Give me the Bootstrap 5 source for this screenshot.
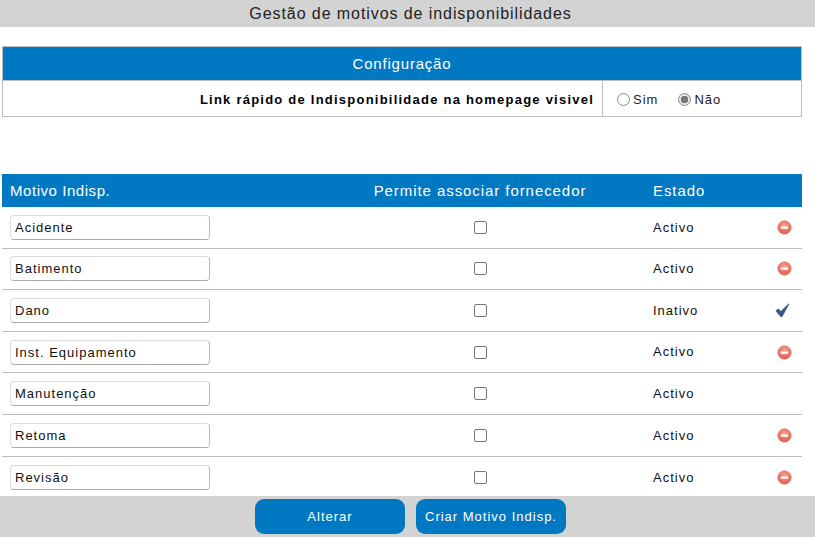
<!DOCTYPE html>
<html lang="pt">
<head>
<meta charset="utf-8">
<title>Gestão de motivos de indisponibilidades</title>
<link rel="stylesheet" href="https://cdn.jsdelivr.net/npm/bootstrap@5.3.0/dist/css/bootstrap.min.css">
<style>
html,body{height:100%;overflow:hidden}
body{font-family:"Liberation Sans",Arial,sans-serif;font-size:13px;letter-spacing:1px;color:#111;background:#fff}
.shell{height:537px}
.topbar{height:27px;background:#d3d3d3;font-size:16px;letter-spacing:.92px;line-height:28px;color:#222;padding-left:6px}
.work{padding:19px 13px 0 2px;min-height:0;overflow:hidden}
.cfg{border:1px solid #bdbdbd;height:71px;margin-bottom:57px}
.cfg-head{height:33px;background:#0079c2;color:#fff;font-size:15px;letter-spacing:.8px;line-height:34px}
.cfg-row{height:36px;border-top:1px solid #bdbdbd}
.cfg-label{width:599px;padding-right:8px;font-weight:700;letter-spacing:1.23px;padding-top:2px;color:#000}
.cfg-opts{border-left:1px solid #bdbdbd;padding-left:14px;color:#222;padding-top:2px}
.rad{appearance:none;width:13px;height:13px;border:1px solid #8a8a8a;border-radius:50%;margin:-1px 3px 0 0;background:#fff;display:block}
.rad:checked{background:radial-gradient(circle,#777 0 3.5px,#e8e8e8 4px)}
.opt{display:flex;align-items:center;margin-right:20px}
.grid-head{height:33px;background:#0079c2;color:#fff;font-size:15px;letter-spacing:.93px;line-height:33px}
.c1{width:330px;padding-left:8px;flex:none}
.grid-head .c1{letter-spacing:.55px}
.c2{width:296px;text-align:center;flex:none}
.c3{width:122px;padding-left:25px;flex:none}
.c4{width:52px;padding-left:27px}
.grid-row{height:41.6px;border-bottom:1px solid #bdbdbd}
.grid-row:last-child{border-bottom:0}
.namebox{width:200px;height:25px;padding:0 4px;border:1px solid #dcdcdc;border-bottom-color:#aaa;border-right-color:#bbb;border-radius:4px;font:13px "Liberation Sans",Arial,sans-serif;letter-spacing:1px;color:#111;display:block;background:#fff}
.tick{appearance:none;width:13px;height:13px;border:1px solid #767676;border-radius:2px;background:#fff;display:block;margin:0 auto}
.foot{height:41px;background:#d3d3d3;gap:11px;padding:3px 0 0 6px}
.act{width:150px;height:35px;background:#0079c2;color:#fff;border:0;border-radius:9px;font-size:13px;letter-spacing:1px;padding:0}
.act:hover{background:#0079c2;color:#fff}
.ico{display:block}
.mchk{margin-left:-2px}
</style>
</head>
<body>
<div class="shell d-flex flex-column">
  <div class="topbar text-center flex-shrink-0">Gestão de motivos de indisponibilidades</div>
  <div class="work flex-grow-1">
    <div class="cfg">
      <div class="cfg-head text-center">Configuração</div>
      <div class="cfg-row d-flex">
        <div class="cfg-label d-flex align-items-center justify-content-end">Link rápido de Indisponibilidade na homepage visivel</div>
        <div class="cfg-opts d-flex align-items-center flex-grow-1">
          <label class="opt"><input class="rad" type="radio" name="q">Sim</label>
          <label class="opt"><input class="rad" type="radio" name="q" checked>Não</label>
        </div>
      </div>
    </div>
    <div class="grid-head d-flex">
      <div class="c1">Motivo Indisp.</div>
      <div class="c2">Permite associar fornecedor</div>
      <div class="c3">Estado</div>
      <div class="c4"></div>
    </div>
    <div>
      <div class="grid-row d-flex align-items-center"><div class="c1"><input class="namebox" value="Acidente"></div><div class="c2"><input class="tick" type="checkbox"></div><div class="c3">Activo</div><div class="c4"><svg class="ico" width="15" height="15" viewBox="0 0 16 16"><use href="#no"/></svg></div></div>
      <div class="grid-row d-flex align-items-center"><div class="c1"><input class="namebox" value="Batimento"></div><div class="c2"><input class="tick" type="checkbox"></div><div class="c3">Activo</div><div class="c4"><svg class="ico" width="15" height="15" viewBox="0 0 16 16"><use href="#no"/></svg></div></div>
      <div class="grid-row d-flex align-items-center"><div class="c1"><input class="namebox" value="Dano"></div><div class="c2"><input class="tick" type="checkbox"></div><div class="c3">Inativo</div><div class="c4"><svg class="ico mchk" width="16" height="16" viewBox="0 0 16 16"><path d="M0.5 9l2.8-2.4 2.6 2.4L13.6 1.5l.7.5L7.2 15H5.8z" fill="#3a5a86"/></svg></div></div>
      <div class="grid-row d-flex align-items-center"><div class="c1"><input class="namebox" value="Inst. Equipamento"></div><div class="c2"><input class="tick" type="checkbox"></div><div class="c3">Activo</div><div class="c4"><svg class="ico" width="15" height="15" viewBox="0 0 16 16"><use href="#no"/></svg></div></div>
      <div class="grid-row d-flex align-items-center"><div class="c1"><input class="namebox" value="Manutenção"></div><div class="c2"><input class="tick" type="checkbox"></div><div class="c3">Activo</div><div class="c4"></div></div>
      <div class="grid-row d-flex align-items-center"><div class="c1"><input class="namebox" value="Retoma"></div><div class="c2"><input class="tick" type="checkbox"></div><div class="c3">Activo</div><div class="c4"><svg class="ico" width="15" height="15" viewBox="0 0 16 16"><use href="#no"/></svg></div></div>
      <div class="grid-row d-flex align-items-center"><div class="c1"><input class="namebox" value="Revisão"></div><div class="c2"><input class="tick" type="checkbox"></div><div class="c3">Activo</div><div class="c4"><svg class="ico" width="15" height="15" viewBox="0 0 16 16"><use href="#no"/></svg></div></div>
    </div>
  </div>
  <div class="foot d-flex justify-content-center flex-shrink-0">
    <button class="btn act" type="button">Alterar</button>
    <button class="btn act" type="button">Criar Motivo Indisp.</button>
  </div>
</div>
<svg width="0" height="0" class="position-absolute"><defs>
<radialGradient id="rg" cx=".5" cy=".35" r=".75"><stop offset="0" stop-color="#f9a194"/><stop offset="1" stop-color="#d8503d"/></radialGradient>
<g id="no"><circle cx="8" cy="8" r="7.2" fill="url(#rg)" stroke="#e08a7c" stroke-width=".8"/><rect x="4" y="6.8" width="8" height="2.4" rx=".4" fill="#fff"/></g>
</defs></svg>
<script src="https://cdn.jsdelivr.net/npm/bootstrap@5.3.0/dist/js/bootstrap.bundle.min.js"></script>
</body>
</html>
